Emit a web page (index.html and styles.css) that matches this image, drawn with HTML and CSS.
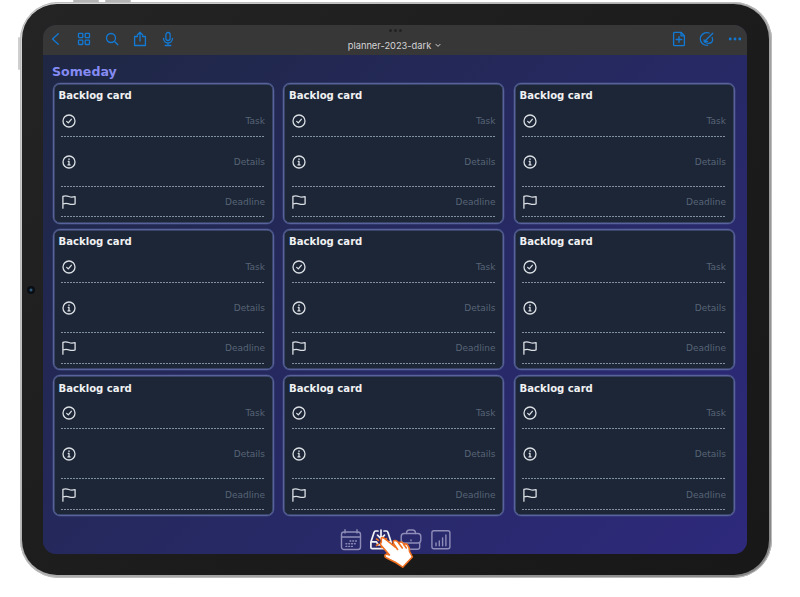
FILE: index.html
```html
<!DOCTYPE html>
<html lang="en">
<head>
<meta charset="utf-8">
<title>planner-2023-dark</title>
<link rel="stylesheet" href="styles.css">
</head>
<body>
<svg class="defs" aria-hidden="true">
  <symbol id="check" viewBox="0 0 14 14"><circle cx="7" cy="7" r="6"/><path d="M4.700 7.400l1.600 1.500 3-3.600"/></symbol>
  <symbol id="info" viewBox="0 0 14 14"><circle cx="7" cy="7" r="6"/><path d="M6.200 6.300H7v3.500M6 9.900h2M7 3.800v.7"/></symbol>
  <symbol id="flag" viewBox="0 0 14 14"><path d="M.9 13.200V1.300c2-.8 4-.6 6 .2s4 .7 6.200.1v7.200c-2.200.8-4.200.7-6.200 0S2.900 8.200.9 9"/></symbol>
</svg>
<div class="device">
  <i class="key key-up"></i><i class="key key-down"></i><i class="key key-power"></i><i class="camera"></i>
  <main class="screen">
    <header class="toolbar">
      <nav class="tools">
        <svg width="14" height="14" viewBox="0 0 14 14"><path d="M9.300 1.800L3.500 7l5.800 5.300"/></svg>
        <svg width="14" height="14" viewBox="0 0 14 14"><rect x="1.500" y="1.300" width="4.300" height="4.300" rx=".7"/><rect x="8.200" y="1.300" width="4.300" height="4.300" rx=".7"/><rect x="1.500" y="8.200" width="4.300" height="4.300" rx=".7"/><rect x="8.200" y="8.200" width="4.300" height="4.300" rx=".7"/></svg>
        <svg width="14" height="14" viewBox="0 0 14 14"><circle cx="6" cy="6" r="4.500"/><path d="M9.300 9.300l3.500 3.500"/></svg>
        <svg width="14" height="16" viewBox="0 0 14 16"><path d="M4.500 5.500H1.600v9h10.800v-9H9.500M7 10V1.500M4.300 4L7 1.300 9.700 4"/></svg>
        <svg width="14" height="16" viewBox="0 0 14 16"><rect x="4.900" y="1.500" width="4.200" height="8" rx="2.100"/><path d="M2.500 7.300c0 6.200 9 6.200 9 0M7 12v2.500M4.200 14.500h5.600"/></svg>
      </nav>
      <div class="heading">
        <span class="grip"><i></i><i></i><i></i></span>
        <span class="name">planner-2023-dark<svg width="6" height="5" viewBox="0 0 6 5"><path d="M1 1.400l2 2 2-2"/></svg></span>
      </div>
      <nav class="tools tools-right">
        <svg width="14" height="16" viewBox="0 0 14 16"><path d="M2.500 1.300h6.500l3.400 3.400v9q0 .9-.9.900h-9q-.9 0-.9-.9V2.200q0-.9.900-.9zM9 1.500v3.300h3.200M4.200 8.500h5.600M7 5.700v5.600"/></svg>
        <svg width="16" height="16" viewBox="0 0 16 16"><path d="M10.200 2C5.500.3 1.300 4 1.300 8s3.200 6.300 7.500 6.300M13.200 6.500c1.500 4-1 6-4 5.800-2.500 0-4-1.500-4.200-3.500M5.200 10.800L13.800 2.200M5.800 10.300h2.800"/></svg>
        <svg class="dots" width="14" height="14" viewBox="0 0 14 14"><circle cx="2.200" cy="7" r="1.400"/><circle cx="7" cy="7" r="1.400"/><circle cx="11.800" cy="7" r="1.400"/></svg>
      </nav>
    </header>
    <h1>Someday</h1>
    <section class="board">
      <article class="card"><h2>Backlog card</h2><div class="row"><svg><use href="#check"/></svg>Task</div><div class="row details"><svg><use href="#info"/></svg>Details</div><div class="row deadline"><svg><use href="#flag"/></svg>Deadline</div></article>
      <article class="card"><h2>Backlog card</h2><div class="row"><svg><use href="#check"/></svg>Task</div><div class="row details"><svg><use href="#info"/></svg>Details</div><div class="row deadline"><svg><use href="#flag"/></svg>Deadline</div></article>
      <article class="card"><h2>Backlog card</h2><div class="row"><svg><use href="#check"/></svg>Task</div><div class="row details"><svg><use href="#info"/></svg>Details</div><div class="row deadline"><svg><use href="#flag"/></svg>Deadline</div></article>
      <article class="card"><h2>Backlog card</h2><div class="row"><svg><use href="#check"/></svg>Task</div><div class="row details"><svg><use href="#info"/></svg>Details</div><div class="row deadline"><svg><use href="#flag"/></svg>Deadline</div></article>
      <article class="card"><h2>Backlog card</h2><div class="row"><svg><use href="#check"/></svg>Task</div><div class="row details"><svg><use href="#info"/></svg>Details</div><div class="row deadline"><svg><use href="#flag"/></svg>Deadline</div></article>
      <article class="card"><h2>Backlog card</h2><div class="row"><svg><use href="#check"/></svg>Task</div><div class="row details"><svg><use href="#info"/></svg>Details</div><div class="row deadline"><svg><use href="#flag"/></svg>Deadline</div></article>
      <article class="card"><h2>Backlog card</h2><div class="row"><svg><use href="#check"/></svg>Task</div><div class="row details"><svg><use href="#info"/></svg>Details</div><div class="row deadline"><svg><use href="#flag"/></svg>Deadline</div></article>
      <article class="card"><h2>Backlog card</h2><div class="row"><svg><use href="#check"/></svg>Task</div><div class="row details"><svg><use href="#info"/></svg>Details</div><div class="row deadline"><svg><use href="#flag"/></svg>Deadline</div></article>
      <article class="card"><h2>Backlog card</h2><div class="row"><svg><use href="#check"/></svg>Task</div><div class="row details"><svg><use href="#info"/></svg>Details</div><div class="row deadline"><svg><use href="#flag"/></svg>Deadline</div></article>
    </section>
    <footer class="dock">
      <svg viewBox="0 0 22 22"><rect x="1.500" y="3" width="19" height="17.500" rx="2.500"/><path d="M1.500 8h19M5 .8V4M17 .8V4"/><path class="days" d="M10 12h7M6 14.700h11M6 17.400h8"/></svg>
      <svg class="active" viewBox="0 0 22 22"><path d="M8 2H5.500q-1 0-1.300 1L.9 13v5.500q0 1.200 1.200 1.200h17.800q1.200 0 1.200-1.200V13L17.800 3q-.3-1-1.300-1H14M1 12.800h5.500l1.600 3h5.800l1.600-3H21M11 1v8.500M7.500 6.200l3.500 3.500 3.500-3.500"/></svg>
      <svg viewBox="0 0 22 22"><rect x="1.200" y="4.500" width="19.600" height="9.500" rx="3"/><path d="M6.500 4.500q0-3.500 3-3.500h3q3 0 3 3.500M2.300 13.500V18q0 2.300 2.300 2.300h12.800q2.300 0 2.300-2.300v-4.500M11 11v.8"/></svg>
      <svg viewBox="0 0 22 22"><rect x="1.900" y="1.800" width="18" height="18" rx="2"/><path d="M6 14v2.800M9.300 12v4.800M12.600 9v7.800M15.900 6v10.800"/></svg>
      <svg class="pointer" viewBox="0 0 44 40">
        <path d="M4.500 8l2 1.300M10 6.500v2M14.500 7.500L13 9M4.500 14.500l2-1.300M9.500 16.500v-1.500"/>
        <path class="hand" d="M9.300 11.200Q7.800 12.500 9 14.200L17.500 24q-4.200-1.800-4.600.3-.3 1.900 2.300 2.900l8.500 4.300 7 4.700L40.400 26l-2.900-5.700q.3-3.500-2-6.500-2.300-1.800-3.500-.2-1.300-3-3.300-2.600-1.700.2-1.500 1.700-2-3.400-4.200-3.200-2.400.2-1.600 2.700l2.200 4.100-11.200-9q-1.800-1.400-3.100-.1z"/>
        <path d="M22 13.500l3.600 5M27.200 12.700l3.100 4.300M32 13.600l2.300 3.400"/>
      </svg>
    </footer>
  </main>
</div>
</body>
</html>
```
FILE: styles.css
```css
* { box-sizing: border-box; }
body { margin: 0; width: 800px; height: 597px; overflow: hidden; background: #fff; font-family: "DejaVu Sans", sans-serif; }
svg { fill: none; stroke: currentColor; stroke-linecap: round; stroke-linejoin: round; flex: none; }
.defs { position: absolute; width: 0; height: 0; }
.device {
  position: relative;
  width: 752px; height: 576px;
  margin: 2px 0 0 20px;
  padding: 23px 25.500px 24px 22.500px;
  border-radius: 38px;
  background: linear-gradient(135deg, #d8d8d8, #a9a9a9 50%, #858585);
  box-shadow: inset 0 0 0 1px #bcbcbc;
}
.device::before {
  content: ""; position: absolute; inset: 2px 3.500px 3px 1.500px;
  border-radius: 35px; background: linear-gradient(135deg, #242424, #1b1b1b 60%, #181818);
}
.key { position: absolute; background: #b5b5b5; border-radius: 2px; }
.key-up { left: 53px; top: -2px; width: 26px; height: 2px; }
.key-down { left: 85px; top: -2px; width: 26px; height: 2px; }
.key-power { left: -2px; top: 35px; width: 2px; height: 33px; background: #cfcfcf; }
.camera { position: absolute; left: 7px; top: 284px; width: 8px; height: 8px; border-radius: 50%; background: radial-gradient(circle, #315c7c 0 12%, #0a1018 35%, #090909); }
.screen {
  position: relative; height: 529px; display: flex; flex-direction: column;
  border-radius: 13px;
  background: linear-gradient(135deg, #1e2742 0%, #262963 55%, #2e297c 100%);
}
.toolbar { height: 30px; flex: none; display: grid; grid-template-columns: 1fr auto 1fr; background: #373738; border-radius: 13px 13px 0 0; }
.tools { display: flex; align-items: center; gap: 14px; padding: 0 0 1.500px 6.500px; color: #1279d4; stroke-width: 1.300; }
.tools-right { justify-content: flex-end; padding: 0 4.500px 1.500px 0; gap: 13px; }
.dots { fill: currentColor; stroke: none; }
.heading { display: flex; flex-direction: column; align-items: center; color: #d4d4d4; }
.grip { display: flex; gap: 2.200px; margin: 4px 0 0 2px; }
.grip i { width: 3px; height: 3px; border-radius: 50%; background: #222; }
.name { margin-top: 7px; font: 9.300px/14px Inter, sans-serif; white-space: nowrap; }
.name svg { margin: 0 0 1px 4px; }
h1 { margin: 8px 0 0 9.500px; font-size: 12.600px; line-height: 17px; color: #858bf2; flex: none; }
.board { display: grid; grid-template-columns: repeat(3, 1fr); grid-auto-rows: 141px; gap: 5.200px 9.500px; margin: 2.500px 12px 0 10px; }
.card { border: 1px solid #57639a; box-shadow: inset 0 0 0 .5px #57639a, 0 0 0 .5px #57639a80; border-radius: 7px; background: #1c2636; padding: 4.800px 7.500px 0; }
h2 { margin: 0 0 0 -2.500px; font-size: 10.100px; line-height: 15px; color: #f0f1f3; }
.row { height: 33.300px; display: flex; align-items: center; justify-content: space-between; padding-top: 2px; font-size: 9px; color: #586477; background: repeating-linear-gradient(90deg, #8290a1 0 2px, transparent 2px 3px) bottom / 100% 1px no-repeat; }
.row svg { width: 14px; height: 14px; color: #dce0e5; stroke-width: 1.300; margin-left: .5px; }
.details { height: 50.500px; padding-top: 0; }
.deadline { height: 30.400px; padding-top: 0; }
.dock { display: flex; justify-content: center; gap: 8px; margin-top: 13px; position: relative; color: #8f8db8; padding-left: 2px; }
.dock svg { width: 22px; height: 22px; stroke-width: 1.400; }
.dock .active { color: #f1f1f6; stroke-width: 1.700; }
.days { stroke-dasharray: .8 2; }
.dock .pointer { position: absolute; left: 329.500px; top: 2px; width: 44px; height: 40px; stroke: #f06f20; stroke-width: 1.600; }
.hand { fill: #fff; }
```
